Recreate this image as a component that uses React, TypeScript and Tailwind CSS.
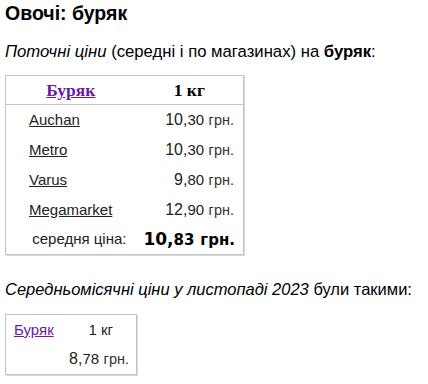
import React from "react";

type Shop = { name: string; whole: string; cents: string };

const shops: Shop[] = [
  { name: "Auchan", whole: "10", cents: "30" },
  { name: "Metro", whole: "10", cents: "30" },
  { name: "Varus", whole: "9", cents: "80" },
  { name: "Megamarket", whole: "12", cents: "90" },
];

function Price({ whole, cents }: { whole: string; cents: string }) {
  return (
    <span className="whitespace-nowrap text-[16px]">
      {whole},<span className="text-[15px]">{cents}</span>{" "}
      <span className="text-[14.5px] text-[#333]">грн.</span>
    </span>
  );
}

export default function App() {
  return (
    <div className="bg-white w-[428px] h-[384px] overflow-hidden px-[5px] text-black text-[17px] leading-[20px] font-['Liberation_Sans',Arial,sans-serif]">
      <h1 className="text-[19.5px] font-bold leading-[24px] pt-[1px]">Овочі: буряк</h1>

      <p className="mt-[17px] text-[16.7px]">
        <i>Поточні ціни</i> (середні і по магазинах) на <b>буряк</b>:
      </p>

      <table className="mt-[13px] w-[239px] border-collapse border border-[#c4c4c4] shadow-[1px_1px_0_#d8d8d8]">
        <colgroup>
          <col className="w-[130px]" />
          <col />
        </colgroup>
        <thead>
          <tr className="h-[29px] border-b border-[#c4c4c4]">
            <th className="text-center font-bold text-[17.5px] font-['Liberation_Serif',serif]">
              <a href="#" className="text-[#6b1aa8] underline">Буряк</a>
            </th>
            <th className="text-center font-bold text-[17.5px] font-['Liberation_Serif',serif]">1 кг</th>
          </tr>
        </thead>
        <tbody>
          {shops.map((s) => (
            <tr key={s.name} className="h-[30px]">
              <td className="pl-[23px] text-[15px]">
                <a href="#" className="text-[#222] underline">{s.name}</a>
              </td>
              <td className="text-right pr-[9px] text-[#222]">
                <Price whole={s.whole} cents={s.cents} />
              </td>
            </tr>
          ))}
          <tr className="h-[30px]">
            <td className="text-right pr-[9px] text-[15px] text-[#222]">середня ціна:</td>
            <td className="text-right pr-[8px] font-bold font-['DejaVu_Sans',sans-serif] text-[17px]">
              10,<span className="text-[15px]">83</span> <span className="text-[15px]">грн.</span>
            </td>
          </tr>
        </tbody>
      </table>

      <p className="mt-[24px] text-[16.5px]">
        <i>Середньомісячні ціни у листопаді 2023</i> були такими:
      </p>

      <table className="mt-[15px] w-[132px] border-collapse border border-[#c4c4c4] shadow-[1px_1px_0_#d8d8d8]">
        <colgroup>
          <col className="w-[64px]" />
          <col />
        </colgroup>
        <tbody>
          <tr className="h-[30px]">
            <td className="pl-[8px] text-[15px]">
              <a href="#" className="text-[#6b1aa8] underline">Буряк</a>
            </td>
            <td className="text-left pl-[19px] text-[15px] text-[#222]">1 кг</td>
          </tr>
          <tr className="h-[30px]">
            <td colSpan={2} className="text-right pr-[7px] text-[#222]">
              <Price whole="8" cents="78" />
            </td>
          </tr>
        </tbody>
      </table>
    </div>
  );
}
